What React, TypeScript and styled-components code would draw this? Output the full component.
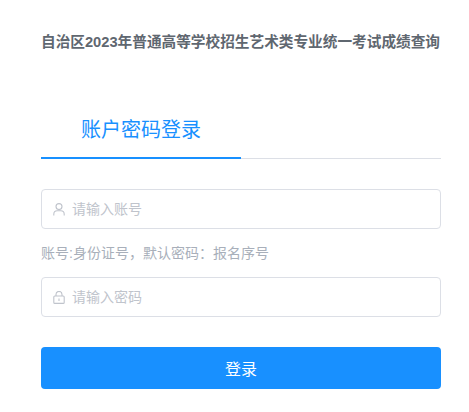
import React from 'react';
import styled, { createGlobalStyle } from 'styled-components';

const GlobalStyle = createGlobalStyle`
    html, body {
        margin: 0;
        background: #ffffff;
        font-family: "Liberation Sans", "Noto Sans CJK SC", sans-serif;
    }
`;

const Page = styled.div`
    width: 400px;
    padding: 33px 0 0 41px;
`;

const Title = styled.h1`
    margin: 0;
    height: 18px;
    font-size: 14.67px;
    line-height: 18px;
    font-weight: 700;
    color: #5f6770;
    white-space: nowrap;
`;

const Tabs = styled.div`
    margin-top: 56px;
    height: 51px;
    border-bottom: 1px solid #dcdfe6;
    display: flex;
`;

const Tab = styled.div`
    width: 200px;
    height: 50px;
    border-bottom: 2px solid #1890ff;
    text-align: center;
    font-size: 20px;
    line-height: 46px;
    color: #1890ff;
`;

const Field = styled.div`
    height: 40px;
    box-sizing: border-box;
    border: 1px solid #dcdfe6;
    border-radius: 4px;
    display: flex;
    align-items: center;
    padding-left: 11px;
    gap: 7px;
    color: #c0c4cc;
`;

const FieldIcon = styled.svg`
    width: 12px;
    height: 13px;
    flex: none;
    fill: none;
    stroke: #c0c4cc;
    stroke-width: 1.1;
`;

const FieldInput = styled.input`
    flex: 1;
    min-width: 0;
    border: 0;
    outline: 0;
    padding: 0;
    font: inherit;
    font-size: 14px;
    background: transparent;

    &::placeholder {
        color: #c0c4cc;
        opacity: 1;
    }
`;

const Form = styled.form`
    margin-top: 30px;
`;

const Hint = styled.div`
    height: 48px;
    font-size: 14px;
    line-height: 48px;
    color: #a8afba;
`;

const SubmitButton = styled.button`
    display: block;
    width: 100%;
    height: 42px;
    margin-top: 30px;
    border: 0;
    border-radius: 4px;
    background: #1890ff;
    color: #ffffff;
    font: inherit;
    font-size: 16px;
`;

const UserIcon = () => (
    <FieldIcon viewBox="0 0 12 13">
        <circle cx="6" cy="3.6" r="3" />
        <path d="M0.8 12.4v-1.2c0-2 1.6-3.4 3.4-3.4h3.6c1.8 0 3.4 1.4 3.4 3.4v1.2" />
    </FieldIcon>
);

const LockIcon = () => (
    <FieldIcon viewBox="0 0 12 13">
        <rect x="0.8" y="5" width="10.4" height="7.4" rx="1" />
        <path d="M3 5V3.4a3 3 0 0 1 6 0V5" />
        <path d="M6 7.6v2.4" />
    </FieldIcon>
);

const App = () => {
    return (
        <Page>
            <GlobalStyle />
            <Title>自治区2023年普通高等学校招生艺术类专业统一考试成绩查询</Title>
            <Tabs>
                <Tab>账户密码登录</Tab>
            </Tabs>
            <Form onSubmit={e => e.preventDefault()}>
                <Field>
                    <UserIcon />
                    <FieldInput placeholder="请输入账号" />
                </Field>
                <Hint>账号:身份证号，默认密码：报名序号</Hint>
                <Field>
                    <LockIcon />
                    <FieldInput placeholder="请输入密码" type="text" />
                </Field>
                <SubmitButton type="submit">登录</SubmitButton>
            </Form>
        </Page>
    );
}

export default App;
